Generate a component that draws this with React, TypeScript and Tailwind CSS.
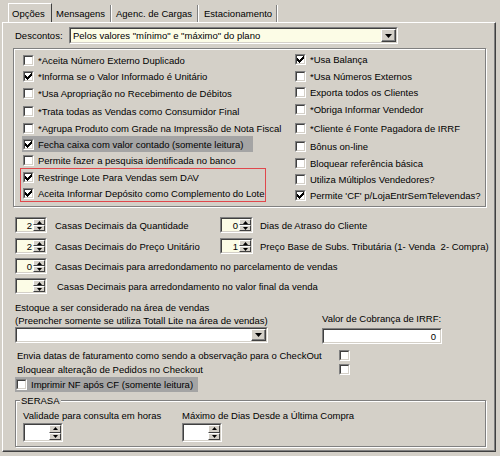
import React from "react";

function CheckMark() {
  return (
    <svg width="7" height="7" viewBox="0 0 7 7" shapeRendering="crispEdges" className="block">
      <path
        d="M6 0h1v1h-1zM5 1h2v1h-2zM0 2h1v1h-1zM4 2h3v1h-3zM0 3h2v1h-2zM3 3h3v1h-3zM0 4h5v1h-5zM1 5h3v1h-3zM2 6h1v1h-1z"
        fill="#000"
      />
    </svg>
  );
}

function Check({ checked }: { checked?: boolean }) {
  return (
    <span className="block w-[11px] h-[11px] shrink-0 border border-t-[#808080] border-l-[#808080] border-r-white border-b-white">
      <span className="flex items-center justify-center w-[9px] h-[9px] bg-white border border-t-[#404040] border-l-[#404040] border-r-[#d4d0c8] border-b-[#d4d0c8]">
        {checked && <CheckMark />}
      </span>
    </span>
  );
}

function Row({
  checked,
  label,
  className = "",
}: {
  checked?: boolean;
  label: string;
  className?: string;
}) {
  return (
    <div className={"flex items-center h-[16px] " + className}>
      <Check checked={checked} />
      <span className="ml-[4px] whitespace-nowrap">{label}</span>
    </div>
  );
}

function Tri({ down }: { down?: boolean }) {
  return (
    <svg width="5" height="3" viewBox="0 0 5 3" className="block">
      <path d={down ? "M0 0h5L2.5 3z" : "M2.5 0L5 3H0z"} fill="#000" />
    </svg>
  );
}

function DropBtn() {
  return (
    <div className="w-[15px] h-full shrink-0 flex items-center justify-center bg-[#d4d0c8] border border-t-white border-l-white border-r-[#404040] border-b-[#404040] shadow-[inset_-1px_-1px_0_#808080]">
      <svg width="7" height="4" viewBox="0 0 7 4" className="block">
        <path d="M0 0h7L3.5 4z" fill="#000" />
      </svg>
    </div>
  );
}

function Sunken({
  className = "",
  inner = "",
  children,
}: {
  className?: string;
  inner?: string;
  children?: React.ReactNode;
}) {
  return (
    <div
      className={
        "shrink-0 border border-t-[#808080] border-l-[#808080] border-r-white border-b-white " +
        className
      }
    >
      <div
        className={
          "flex w-full h-full border border-t-[#404040] border-l-[#404040] border-r-[#d4d0c8] border-b-[#d4d0c8] " +
          inner
        }
      >
        {children}
      </div>
    </div>
  );
}

function SpinBtns({ className = "" }: { className?: string }) {
  return (
    <div className={"flex flex-col shrink-0 h-full " + className}>
      <div className="flex-1 flex items-center justify-center bg-[#d4d0c8] border border-t-white border-l-white border-r-[#404040] border-b-[#404040]">
        <Tri />
      </div>
      <div className="flex-1 flex items-center justify-center bg-[#d4d0c8] border border-t-white border-l-white border-r-[#404040] border-b-[#404040]">
        <Tri down />
      </div>
    </div>
  );
}

function Spin({
  value,
  className,
  bg = "bg-[#fcfce6]",
}: {
  value: string;
  className: string;
  bg?: string;
}) {
  return (
    <Sunken className={className} inner={bg}>
      <div className="flex-1 flex items-center justify-end pr-[1px]">{value}</div>
      <SpinBtns className="w-[12px]" />
    </Sunken>
  );
}

function Tab({ w, pl, children }: { w: string; pl: string; children: React.ReactNode }) {
  return (
    <div
      className={
        "h-[17px] flex items-center border-r border-r-[#808080] shadow-[1px_0_0_white] " + w + " " + pl
      }
    >
      {children}
    </div>
  );
}

export default function App() {
  return (
    <div className="w-[500px] h-[456px] bg-[#d4d0c8] text-black font-['Liberation_Sans',Arial,sans-serif] text-[9.5px] leading-[13px] overflow-hidden">
      {/* tab strip */}
      <div className="h-[22px] flex items-end pl-[8px]">
        <div className="w-[44px] h-[19px] pl-[3px] pt-[1px] flex items-center border-t border-l border-r border-t-white border-l-white border-r-[#404040]">
          Opções
        </div>
        <Tab w="w-[59px]" pl="pl-[4px]">Mensagens</Tab>
        <Tab w="w-[87px]" pl="pl-[5px]">Agenc. de Cargas</Tab>
        <Tab w="w-[79px]" pl="pl-[6px]">Estacionamento</Tab>
      </div>

      {/* page */}
      <div className="ml-[2px] w-[494px] h-[430px] flex flex-col border border-t-white border-l-white border-r-[#404040] border-b-[#404040] shadow-[inset_-1px_-1px_0_#808080]">
        {/* Descontos */}
        <div className="mt-[4px] h-[17px] flex items-center">
          <span className="ml-[12px] w-[54px]">Descontos:</span>
          <Sunken className="w-[329px] h-[17px]" inner="bg-[#fcfce6] items-center">
            <span className="flex-1 pl-[2px] whitespace-nowrap">
              Pelos valores "mínimo" e "máximo" do plano
            </span>
            <DropBtn />
          </Sunken>
        </div>

        {/* option group */}
        <div className="mt-[4px] ml-[10px] w-[473px] h-[159px] shrink-0 flex border border-[#808080] shadow-[inset_1px_1px_0_white,1px_1px_0_white]">
          <div className="ml-[6px] pt-[3px] w-[275px] flex flex-col">
            <Row className="pl-[3px]" label="*Aceita Número Externo Duplicado" />
            <Row className="pl-[3px]" checked label="*Informa se o Valor Informado é Unitário" />
            <Row className="pl-[3px] mt-[1px]" label="*Usa Apropriação no Recebimento de Débitos" />
            <Row className="pl-[3px] mt-[2px]" label="*Trata todas as Vendas como Consumidor Final" />
            <Row
              className="pl-[3px] mt-[1px]"
              label="*Agrupa Produto com Grade na Impressão de Nota Fiscal"
            />
            <Row
              className="ml-[2px] w-[231px] pl-[1px] bg-[#a4a4a4]"
              checked
              label="Fecha caixa com valor contado (somente leitura)"
            />
            <Row className="pl-[3px]" label="Permite fazer a pesquisa identificada no banco" />
            <div className="w-[246px] border border-[#e0474c]">
              <Row className="pl-[2px]" checked label="Restringe Lote Para Vendas sem DAV" />
              <Row
                className="pl-[2px] h-[15px]"
                checked
                label="Aceita Informar Depósito como Complemento do Lote"
              />
            </div>
          </div>
          <div className="pt-[2px] flex flex-col">
            <Row checked label="*Usa Balança" />
            <Row className="mt-[1px]" label="*Usa Números Externos" />
            <Row label="Exporta todos os Clientes" />
            <Row className="mt-[1px]" label="*Obriga Informar Vendedor" />
            <Row className="mt-[3px]" label="*Cliente é Fonte Pagadora de IRRF" />
            <Row className="mt-[2px]" label="Bônus on-line" />
            <Row className="mt-[1px]" label="Bloquear referência básica" />
            <Row label="Utiliza Múltiplos Vendedores?" />
            <Row checked label="Permite 'CF' p/LojaEntrSemTelevendas?" />
          </div>
        </div>

        {/* spin rows */}
        <div className="mt-[10px] ml-[12px] h-[16px] flex items-center">
          <div className="w-[205px] flex items-center">
            <Spin value="2" className="w-[32px] h-[16px]" />
            <span className="ml-[8px] whitespace-nowrap">Casas Decimais da Quantidade</span>
          </div>
          <Spin value="0" className="w-[33px] h-[16px]" />
          <span className="ml-[7px] whitespace-nowrap">Dias de Atraso do Cliente</span>
        </div>
        <div className="mt-[5px] ml-[12px] h-[16px] flex items-center">
          <div className="w-[205px] flex items-center">
            <Spin value="2" className="w-[32px] h-[16px]" />
            <span className="ml-[8px] whitespace-nowrap">Casas Decimais do Preço Unitário</span>
          </div>
          <Spin value="1" className="w-[33px] h-[16px]" />
          <span className="ml-[7px] whitespace-pre">
            Preço Base de Subs. Tributária (1- Venda  2- Compra)
          </span>
        </div>
        <div className="mt-[4px] ml-[12px] h-[16px] flex items-center">
          <Spin value="0" className="w-[32px] h-[16px]" />
          <span className="ml-[8px] whitespace-nowrap">
            Casas Decimais para arredondamento no parcelamento de vendas
          </span>
        </div>
        <div className="mt-[4px] ml-[12px] h-[16px] flex items-center">
          <Spin value="" className="w-[32px] h-[16px]" />
          <span className="ml-[10px] whitespace-nowrap">
            Casas Decimais para arredondamento no valor final da venda
          </span>
        </div>

        {/* estoque / IRRF */}
        <div className="mt-[7px] ml-[12px] flex">
          <div className="w-[253px] flex flex-col">
            <div className="h-[13px] whitespace-nowrap">Estoque a ser considerado na área de vendas</div>
            <div className="h-[13px] whitespace-nowrap">
              (Preencher somente se utiliza Totall Lite na área de vendas)
            </div>
            <Sunken className="w-[253px] h-[16px]" inner="bg-white">
              <div className="flex-1" />
              <DropBtn />
            </Sunken>
          </div>
          <div className="ml-[54px] pt-[11px] flex flex-col">
            <div className="h-[13px] whitespace-nowrap">Valor de Cobrança de IRRF:</div>
            <Sunken className="mt-[3px] w-[120px] h-[16px]" inner="bg-white items-center justify-end pr-[4px]">
              0
            </Sunken>
          </div>
        </div>

        <div className="mt-[4px] ml-[14px] h-[14px] flex items-center">
          <span className="w-[322px] whitespace-nowrap">
            Envia datas de faturamento como sendo a observação para o CheckOut
          </span>
          <Check />
        </div>
        <div className="ml-[14px] h-[14px] flex items-center">
          <span className="w-[322px] whitespace-nowrap">Bloquear alteração de Pedidos no Checkout</span>
          <Check />
        </div>
        <div className="mt-[1px] ml-[12px] w-[183px] h-[15px] pl-[1px] flex items-center bg-[#a4a4a4]">
          <Check />
          <span className="ml-[4px] whitespace-nowrap">Imprimir NF após CF (somente leitura)</span>
        </div>

        {/* SERASA */}
        <div className="relative mt-[8px] ml-[12px] w-[471px] h-[47px] shrink-0 border border-[#808080] shadow-[inset_1px_1px_0_white,1px_1px_0_white]">
          <span className="absolute left-[4px] -top-[7px] px-[1px] bg-[#d4d0c8] leading-[13px]">
            SERASA
          </span>
          <div className="pt-[8px] pl-[7px] flex">
            <div className="w-[159px] flex flex-col">
              <div className="h-[13px] whitespace-nowrap">Validade para consulta em horas</div>
              <Spin value="" className="mt-[1px] w-[40px] h-[19px]" bg="bg-white" />
            </div>
            <div className="flex flex-col">
              <div className="h-[13px] whitespace-nowrap">Máximo de Dias Desde a Última Compra</div>
              <Spin value="" className="mt-[1px] w-[40px] h-[19px]" bg="bg-white" />
            </div>
          </div>
        </div>
      </div>
    </div>
  );
}
